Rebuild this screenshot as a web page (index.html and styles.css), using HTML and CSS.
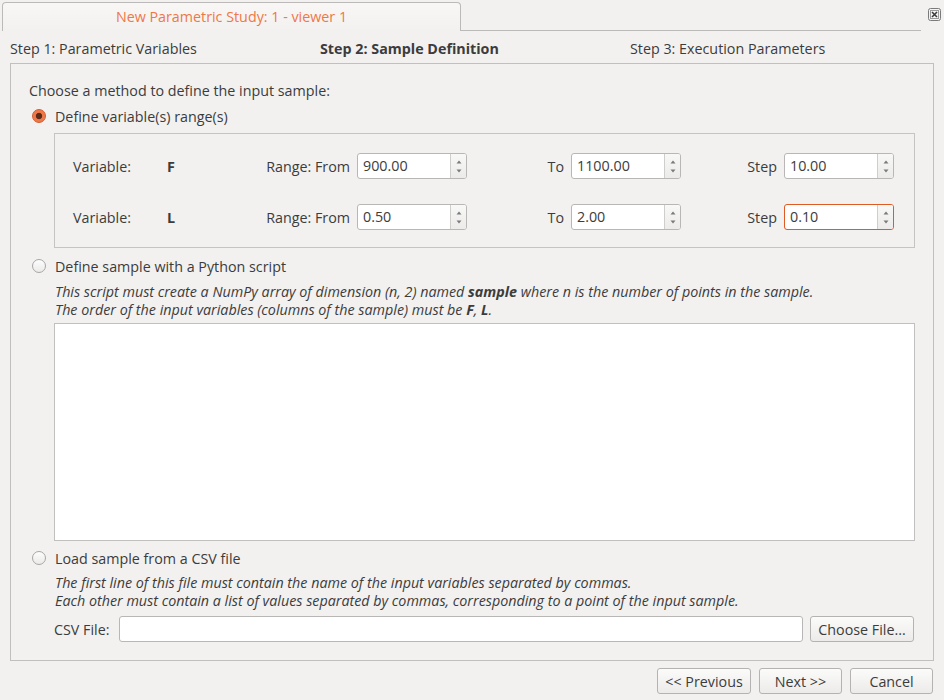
FILE: index.html
```html
<!DOCTYPE html>
<html>
<head>
<meta charset="utf-8">
<link rel="stylesheet" href="styles.css">
</head>
<body>
<div class="window">
  <div class="tabbar">
    <div class="tab">New Parametric Study: 1 - viewer 1</div>
    <div class="tabline"></div>
    <div class="close"><svg width="13" height="13" viewBox="0 0 13 13"><rect x="0.5" y="0.5" width="12" height="12" rx="2" fill="#f4f3f2" stroke="#7a7a7a"/><rect x="2.5" y="2.5" width="8" height="8" fill="none" stroke="#9a9a9a"/><path d="M4 4 L9 9 M9 4 L4 9" stroke="#3c3c3c" stroke-width="1.6"/></svg></div>
  </div>
  <div class="steps">
    <div class="step">Step 1: Parametric Variables</div>
    <div class="step active">Step 2: Sample Definition</div>
    <div class="step">Step 3: Execution Parameters</div>
  </div>
  <div class="frame">
    <div class="prompt">Choose a method to define the input sample:</div>
    <div class="option"><span class="radio checked"></span><span>Define variable(s) range(s)</span></div>
    <div class="group">
      <div class="varrow">
        <div class="cell">Variable:</div>
        <div class="cell bold">F</div>
        <div class="cell right">Range: From <div class="spin"><span class="val">900.00</span><span class="arrows"><svg width="6" height="4" viewBox="0 0 6 4"><path d="M3 0.5 L5.5 3.5 H0.5Z" fill="#7a7a7a"/></svg><svg width="6" height="4" viewBox="0 0 6 4"><path d="M3 3.5 L5.5 0.5 H0.5Z" fill="#7a7a7a"/></svg></span></div></div>
        <div class="cell right">To <div class="spin"><span class="val">1100.00</span><span class="arrows"><svg width="6" height="4" viewBox="0 0 6 4"><path d="M3 0.5 L5.5 3.5 H0.5Z" fill="#7a7a7a"/></svg><svg width="6" height="4" viewBox="0 0 6 4"><path d="M3 3.5 L5.5 0.5 H0.5Z" fill="#7a7a7a"/></svg></span></div></div>
        <div class="cell right">Step <div class="spin"><span class="val">10.00</span><span class="arrows"><svg width="6" height="4" viewBox="0 0 6 4"><path d="M3 0.5 L5.5 3.5 H0.5Z" fill="#7a7a7a"/></svg><svg width="6" height="4" viewBox="0 0 6 4"><path d="M3 3.5 L5.5 0.5 H0.5Z" fill="#7a7a7a"/></svg></span></div></div>
      </div>
      <div class="varrow">
        <div class="cell">Variable:</div>
        <div class="cell bold">L</div>
        <div class="cell right">Range: From <div class="spin"><span class="val">0.50</span><span class="arrows"><svg width="6" height="4" viewBox="0 0 6 4"><path d="M3 0.5 L5.5 3.5 H0.5Z" fill="#7a7a7a"/></svg><svg width="6" height="4" viewBox="0 0 6 4"><path d="M3 3.5 L5.5 0.5 H0.5Z" fill="#7a7a7a"/></svg></span></div></div>
        <div class="cell right">To <div class="spin"><span class="val">2.00</span><span class="arrows"><svg width="6" height="4" viewBox="0 0 6 4"><path d="M3 0.5 L5.5 3.5 H0.5Z" fill="#7a7a7a"/></svg><svg width="6" height="4" viewBox="0 0 6 4"><path d="M3 3.5 L5.5 0.5 H0.5Z" fill="#7a7a7a"/></svg></span></div></div>
        <div class="cell right">Step <div class="spin focus"><span class="val">0.10</span><span class="arrows"><svg width="6" height="4" viewBox="0 0 6 4"><path d="M3 0.5 L5.5 3.5 H0.5Z" fill="#7a7a7a"/></svg><svg width="6" height="4" viewBox="0 0 6 4"><path d="M3 3.5 L5.5 0.5 H0.5Z" fill="#7a7a7a"/></svg></span></div></div>
      </div>
    </div>
    <div class="option opt2"><span class="radio"></span><span>Define sample with a Python script</span></div>
    <div class="note">This script must create a NumPy array of dimension (n, 2) named <b>sample</b> where n is the number of points in the sample.<br>The order of the input variables (columns of the sample) must be <b>F</b>, <b>L</b>.</div>
    <div class="editor"></div>
    <div class="option opt3"><span class="radio"></span><span>Load sample from a CSV file</span></div>
    <div class="note note2">The first line of this file must contain the name of the input variables separated by commas.<br>Each other must contain a list of values separated by commas, corresponding to a point of the input sample.</div>
    <div class="csvrow">
      <span class="csvlabel">CSV File:</span>
      <div class="field"></div>
      <div class="btn choose">Choose File...</div>
    </div>
  </div>
  <div class="buttons">
    <div class="btn prev">&lt;&lt; Previous</div>
    <div class="btn next">Next &gt;&gt;</div>
    <div class="btn cancel">Cancel</div>
  </div>
</div>
</body>
</html>
```
FILE: styles.css
```css
* { box-sizing: border-box; }
html, body { margin: 0; padding: 0; }
body {
  background: #f2f1f0;
  font-family: "Open Sans", "DejaVu Sans", sans-serif;
  font-size: 14.3px;
  color: #3c3c3c;
  width: 944px;
  height: 700px;
  overflow: hidden;
}
.window { display: flex; flex-direction: column; height: 700px; }

.tabbar { display: flex; align-items: flex-end; height: 31px; padding-left: 2px; }
.tab {
  width: 459px; height: 29px;
  border: 1px solid #bcbab8; border-bottom: none;
  border-radius: 4px 4px 0 0;
  background: linear-gradient(#f8f7f6, #f2f1f0);
  color: #f07746;
  text-align: center;
  line-height: 27px;
  font-size: 14.3px;
}
.tabline { width: 460px; height: 1px; background: #bcbab8; margin-bottom: 0; }
.close { align-self: flex-start; margin: 8px 0 0 7px; width: 13px; height: 13px; }
.close svg { display: block; }

.steps { display: grid; grid-template-columns: 310px 310px 310px; padding: 2px 0 0 10px; height: 32px; align-items: center; }
.step.active { font-weight: 700; }

.frame {
  margin-left: 10px; width: 924px; height: 598px;
  border: 1px solid #c2c0be;
  padding: 18px 18px 0 18px;
  display: flex; flex-direction: column;
}
.prompt { line-height: 18px; }
.option { display: flex; align-items: center; height: 18px; margin-top: 7px; }
.radio {
  width: 14px; height: 14px; border-radius: 50%;
  border: 1px solid #a8a6a4; background: linear-gradient(#fdfdfd, #ebeae9);
  margin-left: 3px; margin-right: 9px; flex: none;
}
.radio.checked {
  border-color: #d25a2c;
  background: radial-gradient(circle, #5b2b1a 0, #5b2b1a 2.8px, #f07746 3.6px, #ee7a4c 100%);
}

.group {
  margin: 8px 0 0 25px; width: 861px; height: 115px;
  border: 1px solid #c6c4c2;
  padding: 19px 0 0 18px;
  display: flex; flex-direction: column; gap: 25px;
}
.varrow { display: grid; grid-template-columns: 94px 99px 201px 214px 213px; height: 26px; align-items: center; }
.cell.bold { font-weight: 700; }
.cell.right { display: flex; justify-content: flex-end; align-items: center; gap: 7px; }
.spin {
  width: 110px; height: 26px; flex: none;
  border: 1px solid #b9b7b5; border-radius: 3px;
  background: #fff;
  display: flex;
}
.spin.focus { border-color: #e05a24; }
.spin .val { flex: 1; padding-left: 5px; line-height: 24px; color: #3c3c3c; }
.spin .arrows {
  width: 16px; border-left: 1px solid #d0cecc;
  background: linear-gradient(#f8f8f7, #ecebea);
  border-radius: 0 2px 2px 0;
  display: flex; flex-direction: column; justify-content: space-between; align-items: center;
  padding: 6px 0 5px;
}
.spin .arrows svg { display: block; }

.opt2 { margin-top: 9px; }
.note { font-style: italic; margin: 8px 0 0 26px; line-height: 18px; }
.note2 { margin-top: 7px; }
.editor {
  margin: 4px 0 0 25px; width: 861px; height: 218px;
  background: #fff; border: 1px solid #c2c0be;
}
.opt3 { margin-top: 8px; }
.csvrow { display: flex; align-items: center; margin: 6px 0 0 25px; width: 860px; height: 26px; }
.csvlabel { width: 65px; flex: none; }
.field {
  width: 684px; height: 26px; flex: none;
  background: #fff; border: 1px solid #b9b7b5; border-radius: 3px;
}
.btn {
  height: 26px; border: 1px solid #b5b3b1; border-radius: 3px;
  background: linear-gradient(#fbfbfa, #ecebea);
  display: flex; align-items: center; justify-content: center;
  color: #3c3c3c; flex: none;
}
.choose { width: 104px; margin-left: 7px; }

.buttons { display: flex; justify-content: flex-end; gap: 8px; padding: 7px 11px 0 0; }
.prev { width: 94px; }
.next { width: 83px; }
.cancel { width: 83px; }
```
